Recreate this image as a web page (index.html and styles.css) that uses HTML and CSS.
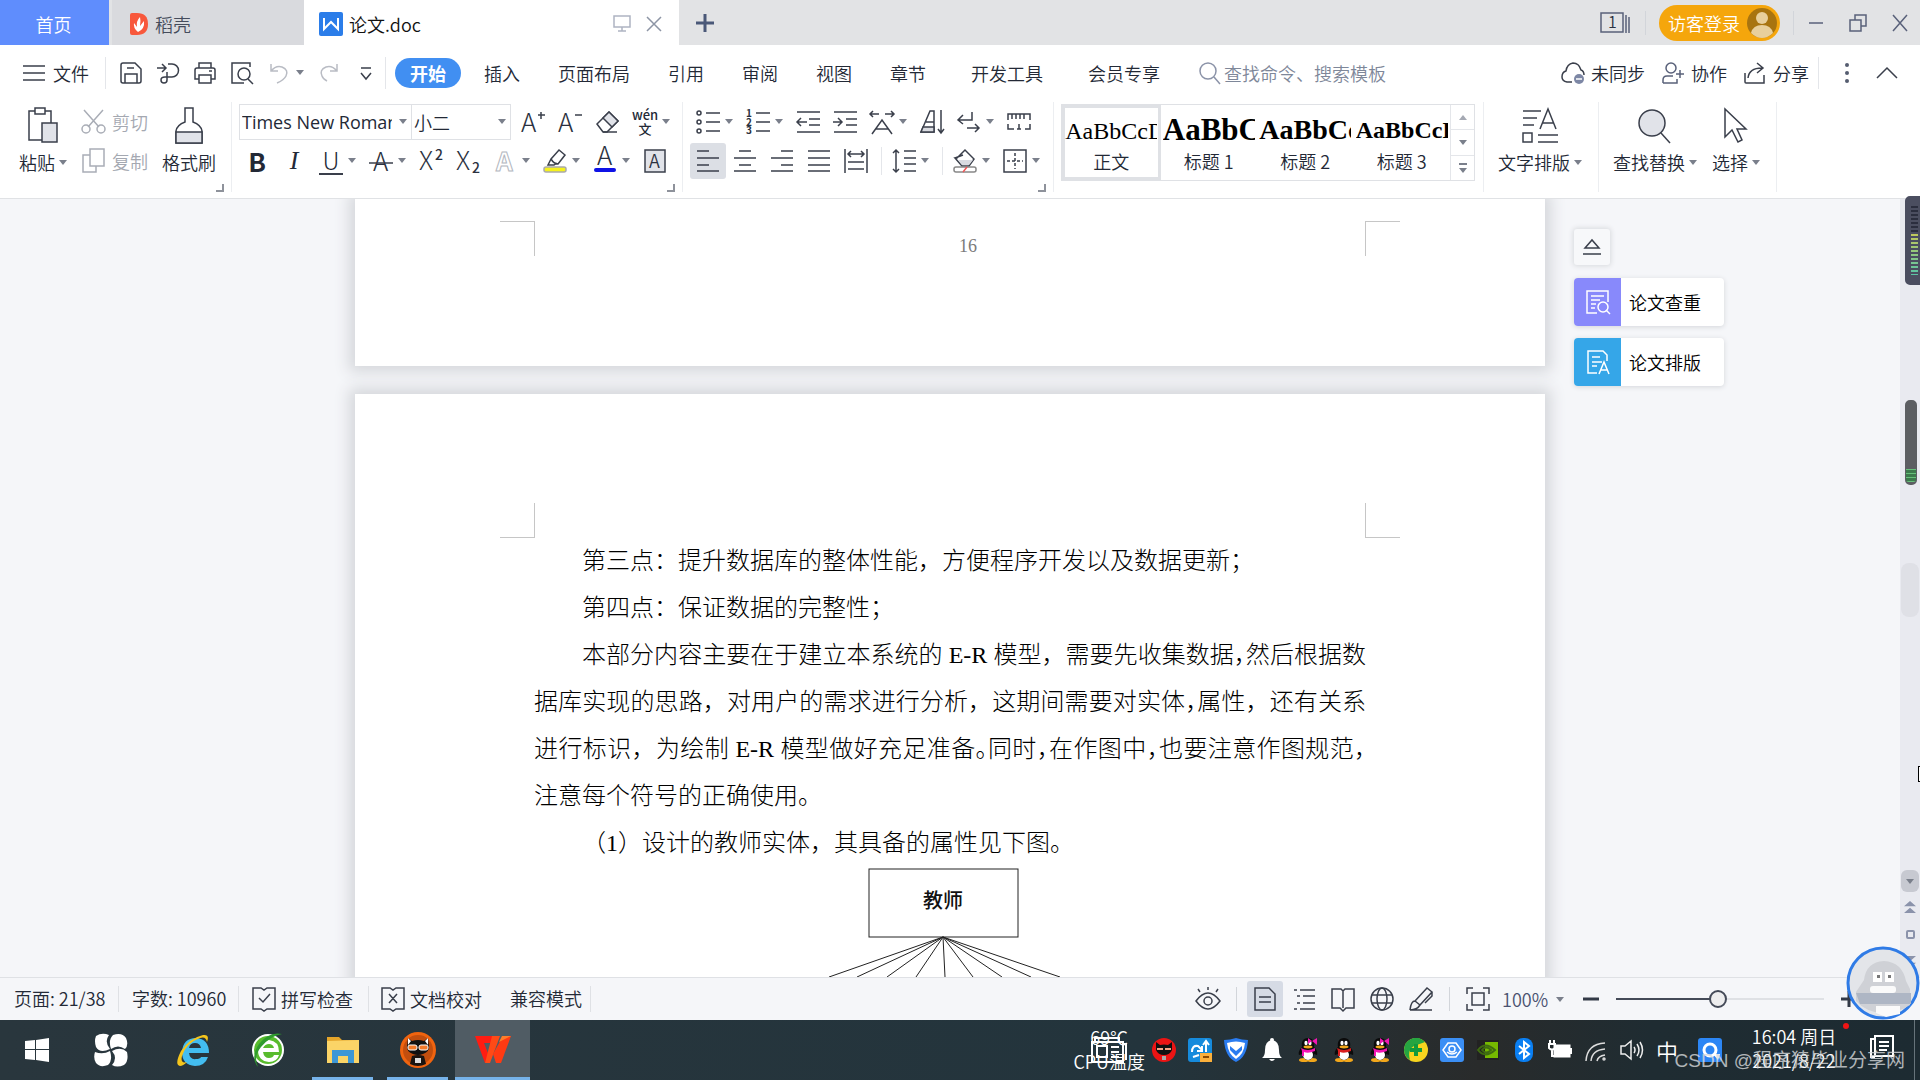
FILE: index.html
```
<!DOCTYPE html>
<html lang="zh-CN">
<head>
<meta charset="utf-8">
<title>论文.doc</title>
<link rel="stylesheet" href="styles.css">
</head>
<body>
<svg class="defs" aria-hidden="true">
  <symbol id="qq" viewBox="0 0 24 24">
    <ellipse cx="8" cy="22" rx="5" ry="2" fill="#f2a71b"/><ellipse cx="16" cy="22" rx="5" ry="2" fill="#f2a71b"/>
    <path d="M12 0c-5 0-7 4-6 9-2 2-4 5-3 8l3-1c1 4 3 6 6 6s5-2 6-6l3 1c1-3-1-6-3-8 1-5-1-9-6-9z" fill="#0b0b0b"/>
    <ellipse cx="12" cy="17" rx="5" ry="5" fill="#fff"/>
    <ellipse cx="10" cy="5" rx="1.600" ry="2.200" fill="#fff"/><ellipse cx="14" cy="5" rx="1.600" ry="2.200" fill="#fff"/>
    <ellipse cx="12" cy="9" rx="4.500" ry="1.400" fill="#f2a71b"/>
    <path d="M5 10q7 4 14 0v3q-7 3-11 1v4H6v-5z" fill="currentColor"/>
  </symbol>
  <symbol id="bow" viewBox="0 0 24 24"><path d="M16 3l-4-3v6zM16 3l5-3v7z" fill="#f216b4"/></symbol>
</svg>
<div class="app">
  <header class="tabs">
    <button class="tab home">首页</button>
    <button class="tab docer">
      <svg width="18" height="22" viewBox="0 0 18 22"><path d="M0 2Q0 0 2 0h5q11 0 11 11T7 22H2q-2 0-2-2z" fill="#f8583c"/><path d="M8 19q-5-4-4-9l3 4q-1-6 3-10 1 4 0 9l4-5q1 8-6 11z" fill="#fff"/></svg>稻壳</button>
    <div class="tab doc">
      <svg width="24" height="24" viewBox="0 0 24 24"><rect width="24" height="24" rx="2" fill="#2b7de9"/><path d="M5 6v11l7-7 7 7V6" fill="none" stroke="#fff" stroke-width="2"/></svg>
      <span class="name">论文.doc</span>
      <button class="plain" aria-label="预览"><svg class="ic pale" width="18" height="18" viewBox="0 0 18 18"><path d="M1 1h16v11H1zM9 12v4M5 16h8"/></svg></button>
      <button class="plain" aria-label="关闭标签"><svg class="ic gray" width="18" height="18" viewBox="0 0 18 18"><path d="M2 2l14 14M16 2L2 16"/></svg></button>
    </div>
    <button class="plain add" aria-label="新建"><svg width="18" height="18" viewBox="0 0 18 18"><path d="M9 0v18M0 9h18" stroke="#4a5878" stroke-width="3"/></svg></button>
    <div class="window">
      <button class="plain" aria-label="窗口"><svg class="ic slate" width="32" height="24" viewBox="0 0 32 24"><path d="M1 2h22v19H1zM26 4v18M29 6v16"/><text x="8" y="17" class="t16">1</text></svg></button>
      <i class="sep"></i>
      <button class="login">访客登录<svg width="30" height="30" viewBox="0 0 30 30"><circle cx="15" cy="15" r="15" fill="#a87410"/><circle cx="15" cy="10" r="6" fill="#e8cf9c"/><path d="M4 25q2-8 11-8t11 8q-5 5-11 5T4 25z" fill="#e8cf9c"/></svg></button>
      <i class="sep"></i>
      <button class="plain" aria-label="最小化"><svg class="ic slate" width="18" height="18" viewBox="0 0 18 18"><path d="M2 9h14"/></svg></button>
      <button class="plain" aria-label="还原"><svg class="ic slate" width="18" height="18" viewBox="0 0 18 18"><path d="M1 6h11v11H1zM6 6V1h11v11h-5"/></svg></button>
      <button class="plain" aria-label="关闭"><svg class="ic slate" width="18" height="18" viewBox="0 0 18 18"><path d="M2 1l14 16M16 1L2 17"/></svg></button>
    </div>
  </header>

  <nav class="menu">
    <button class="file"><svg class="ic" width="22" height="18" viewBox="0 0 22 18"><path d="M0 2h22M0 9h22M0 16h22"/></svg>文件</button>
    <i class="sep tall"></i>
    <div class="quick">
      <button class="plain" aria-label="保存"><svg class="ic" width="24" height="24" viewBox="0 0 24 24"><path d="M2 4q0-2 2-2h12l6 6v12q0 2-2 2H4q-2 0-2-2zM6 22v-9h12v9M8 7h7"/></svg></button>
      <button class="plain" aria-label="输出"><svg class="ic" width="24" height="24" viewBox="0 0 24 24"><path d="M1 7h8M6 3l4 4-4 4M12 3h4a6 6 0 0 1 0 13H9q-4 0-4 3t3 3 3-3V11"/></svg></button>
      <button class="plain" aria-label="打印"><svg class="ic" width="24" height="24" viewBox="0 0 24 24"><path d="M6 7V2h12v5M6 18H2V9q0-2 2-2h16q2 0 2 2v9h-4M6 14h12v8H6zM16 10h3"/></svg></button>
      <button class="plain" aria-label="打印预览"><svg class="ic" width="24" height="24" viewBox="0 0 24 24"><path d="M7 22H2V2h18v4M18 18l5 5"/><circle cx="14" cy="13" r="6"/><path d="M7 22h7"/></svg></button>
      <button class="plain dd" aria-label="撤销"><svg class="ic faint" width="24" height="24" viewBox="0 0 24 24"><path d="M4 3v7h7M4 10q5-6 11-4 7 3 4 9-2 4-9 7"/></svg><i class="caret"></i></button>
      <button class="plain" aria-label="恢复"><svg class="ic faint" width="24" height="24" viewBox="0 0 24 24"><path d="M20 3v7h-7M20 10q-5-6-11-4-7 3-4 9 1 3 5 5"/></svg></button>
      <button class="plain" aria-label="更多"><svg class="ic" width="24" height="24" viewBox="0 0 24 24"><path d="M7 7h10M7 12l5 6 5-6"/></svg></button>
    </div>
    <i class="sep tall"></i>
    <div class="menus">
      <button class="current">开始</button>
      <button>插入</button><button>页面布局</button><button>引用</button><button>审阅</button><button>视图</button><button>章节</button><button class="wide">开发工具</button><button class="wide">会员专享</button>
      <label class="search"><svg class="ic mute" width="24" height="24" viewBox="0 0 24 24"><circle cx="10" cy="10" r="8"/><path d="M16 16l6 7"/></svg><input type="text" placeholder="查找命令、搜索模板"></label>
    </div>
    <div class="share">
      <button><svg class="ic" width="24" height="24" viewBox="0 0 24 24"><path d="M11 21H6q-5-1-5-5 0-5 4-6 1-7 7-8 6 0 8 7 3 1 3 5"/><circle cx="18" cy="18" r="5" fill="#7d87a5" stroke="none"/><path d="M15 18h6" stroke="#fff"/></svg>未同步</button>
      <button><svg class="ic slate" width="24" height="24" viewBox="0 0 24 24"><circle cx="10" cy="7" r="5"/><path d="M2 22v-3q0-4 4-4h6M2 22h14v-4M19 9v8M15 13h8"/></svg>协作</button>
      <button><svg class="ic" width="24" height="24" viewBox="0 0 24 24"><path d="M2 12v9q0 1 1 1h18v-8M5 17q1-10 14-10M14 2l6 5-6 5"/></svg>分享</button>
      <i class="sep tall"></i>
      <button class="plain" aria-label="菜单"><svg width="24" height="24" viewBox="0 0 24 24" fill="#555d70"><circle cx="12" cy="4" r="2"/><circle cx="12" cy="12" r="2"/><circle cx="12" cy="20" r="2"/></svg></button>
      <button class="plain" aria-label="收起功能区"><svg class="ic" width="24" height="24" viewBox="0 0 24 24"><path d="M2 17L12 7l10 10"/></svg></button>
    </div>
  </nav>

  <section class="ribbon">
    <div class="group clip">
      <button class="big"><svg class="ic" width="36" height="40" viewBox="0 0 36 40"><path d="M10 5H4v29h13M26 17V5h-6M10 2h10v6H10z"/><path d="M17 17h15v19H17z" fill="#e1e3e9"/></svg><span>粘贴<i class="caret"></i></span></button>
      <div class="rows">
        <button class="off"><svg class="ic" width="25" height="25" viewBox="0 0 25 25"><path d="M3 1l15 17M22 1L7 18"/><circle cx="5" cy="20" r="4"/><circle cx="20" cy="20" r="4"/></svg>剪切</button>
        <button class="off"><svg class="ic" width="25" height="25" viewBox="0 0 25 25"><path d="M9 1h14v17H9zM9 7H2v17h13v-6"/></svg>复制</button>
      </div>
      <button class="big"><svg class="ic" width="36" height="40" viewBox="0 0 36 40"><path d="M14 2h8v14q8 3 9 9v12H5V25q1-6 9-9z"/><path d="M5 26h26v11H5z" fill="#e1e3e9"/></svg><span>格式刷</span></button>
      <svg class="corner" width="8" height="8" viewBox="0 0 8 8"><path d="M7 0v7H0"/></svg>
    </div>
    <div class="group font">
      <div class="line">
        <div class="combo">
          <label class="family"><select aria-label="字体"><option>Times New Roman</option></select><i class="caret"></i></label>
          <label class="size"><select aria-label="字号"><option>小二</option></select><i class="caret"></i></label>
        </div>
        <button aria-label="增大字号"><svg class="ic" width="24" height="24" viewBox="0 0 24 24"><text x="0" y="22" class="t24">A</text><path d="M17 5h7M20 2v7"/></svg></button>
        <button aria-label="减小字号"><svg class="ic" width="24" height="24" viewBox="0 0 24 24"><text x="0" y="22" class="t24">A</text><path d="M17 5h7"/></svg></button>
        <button aria-label="清除格式"><svg class="ic" width="24" height="24" viewBox="0 0 24 24"><path d="M2 14L14 2l9 9-11 11H8z"/><path d="M8 8l6-6 9 9-6 6z" fill="#e1e3e9"/><path d="M8 22h14"/></svg></button>
        <button class="dd pinyin" aria-label="拼音指南"><span>wén<br>文</span><i class="caret"></i></button>
      </div>
      <div class="line">
        <button class="bold" aria-label="加粗">B</button>
        <button class="italic" aria-label="倾斜">I</button>
        <button class="dd under" aria-label="下划线"><b>U</b><i class="caret"></i></button>
        <button class="dd" aria-label="删除线"><svg class="ic" width="24" height="24" viewBox="0 0 24 24"><text x="4" y="22" class="t24">A</text><path d="M0 14h24"/></svg><i class="caret"></i></button>
        <button aria-label="上标"><svg class="ic" width="24" height="24" viewBox="0 0 24 24"><text x="0" y="21" class="t24">X</text><text x="16" y="11" class="t12">2</text></svg></button>
        <button aria-label="下标"><svg class="ic" width="24" height="24" viewBox="0 0 24 24"><text x="0" y="21" class="t24">X</text><text x="16" y="24" class="t12">2</text></svg></button>
        <button class="dd" aria-label="文字效果"><svg class="ic" width="24" height="24" viewBox="0 0 24 24"><text x="3" y="22" class="t24 hollow">A</text></svg><i class="caret"></i></button>
        <button class="dd" aria-label="突出显示"><svg class="ic" width="24" height="24" viewBox="0 0 24 24"><path d="M8 10l8-9 6 5-7 9q-4 0-7-5zM8 10l-3 6h6l3-2"/><rect x="1" y="18" width="22" height="5" rx="2" fill="#f6f21c" stroke="#aaa"/></svg><i class="caret"></i></button>
        <button class="dd" aria-label="字体颜色"><svg class="ic" width="24" height="24" viewBox="0 0 24 24"><text x="4" y="16" class="t24">A</text><rect x="1" y="19" width="22" height="4" rx="2" fill="#0f12e6" stroke="none"/></svg><i class="caret"></i></button>
        <button aria-label="字符底纹"><svg class="ic" width="24" height="24" viewBox="0 0 24 24"><rect x="2" y="1" width="20" height="22" fill="#e1e3e9"/><text x="6" y="19" class="t18">A</text></svg></button>
      </div>
      <svg class="corner" width="8" height="8" viewBox="0 0 8 8"><path d="M7 0v7H0"/></svg>
    </div>
    <div class="group para">
      <div class="line">
        <button class="dd" aria-label="项目符号"><svg class="ic" width="24" height="24" viewBox="0 0 24 24"><circle cx="3" cy="3" r="2"/><circle cx="3" cy="12" r="2"/><circle cx="3" cy="21" r="2"/><path d="M10 3h14M10 12h14M10 21h14"/></svg><i class="caret"></i></button>
        <button class="dd" aria-label="编号"><svg class="ic" width="24" height="24" viewBox="0 0 24 24"><text x="0" y="7" class="t10">1</text><text x="0" y="16" class="t10">2</text><text x="0" y="24" class="t10">3</text><path d="M10 3h14M10 12h14M10 21h14"/></svg><i class="caret"></i></button>
        <button aria-label="减少缩进"><svg class="ic" width="24" height="24" viewBox="0 0 24 24"><path d="M1 2h23M13 9h11M13 15h11M1 22h23M11 12H1M5 8l-4 4 4 4"/></svg></button>
        <button aria-label="增加缩进"><svg class="ic" width="24" height="24" viewBox="0 0 24 24"><path d="M1 2h23M13 9h11M13 15h11M1 22h23M0 12h9M5 8l4 4-4 4"/></svg></button>
        <button class="dd" aria-label="字符缩放"><svg class="ic" width="24" height="24" viewBox="0 0 24 24"><path d="M0 4h9M15 4h9M3 1L0 4l3 3M21 1l3 3-3 3M2 24L12 10l10 14M6 19h12"/></svg><i class="caret"></i></button>
        <button aria-label="排序"><svg class="ic" width="24" height="24" viewBox="0 0 24 24"><path d="M1 22L10 1h4v21zM6 12h8"/><path d="M3 17h11v5H1z" fill="#d9dbe1"/><path d="M21 0v22M18 19l3 4 3-4"/></svg></button>
        <button class="dd" aria-label="显示编辑标记"><svg class="ic" width="24" height="24" viewBox="0 0 24 24"><path d="M15 2v8H2M6 5L1 10l5 4M10 18h12M18 14l4 4-4 4"/></svg><i class="caret"></i></button>
        <button aria-label="制表位"><svg class="ic" width="24" height="24" viewBox="0 0 24 24"><path d="M1 10V4h22v6M5 4v5M9 4v5M13 4v5M17 4v5M1 14v5h6M10 19h4M12 14v5M23 14v5h-5"/></svg></button>
      </div>
      <div class="line">
        <button class="on" aria-label="左对齐"><svg class="ic" width="24" height="24" viewBox="0 0 24 24"><path d="M1 2h12M1 9h22M1 16h12M1 22h22"/></svg></button>
        <button aria-label="居中"><svg class="ic" width="24" height="24" viewBox="0 0 24 24"><path d="M6 2h12M1 9h22M6 16h12M1 22h22"/></svg></button>
        <button aria-label="右对齐"><svg class="ic" width="24" height="24" viewBox="0 0 24 24"><path d="M11 2h12M1 9h22M11 16h12M1 22h22"/></svg></button>
        <button aria-label="两端对齐"><svg class="ic" width="24" height="24" viewBox="0 0 24 24"><path d="M1 2h22M1 9h22M1 16h22M1 22h22"/></svg></button>
        <button aria-label="分散对齐"><svg class="ic" width="24" height="24" viewBox="0 0 24 24"><path d="M1 0v24M23 0v24M4 5h16M7 2L4 5l3 3M17 2l3 3-3 3M4 13h16M4 20h16"/></svg></button>
        <button class="dd cut" aria-label="行距"><svg class="ic" width="24" height="24" viewBox="0 0 24 24"><path d="M4 1v22M1 4l3-3 3 3M1 20l3 3 3-3M12 2h12M12 9h12M12 15h12M12 22h12"/></svg><i class="caret"></i></button>
        <button class="dd cut" aria-label="底纹颜色"><svg class="ic" width="24" height="24" viewBox="0 0 24 24"><path d="M4 9L12 1l9 9-5 7H9L2 9zM2 9l8-3"/><path d="M5 11h15l-4 5H9z" fill="#d9dbe1" stroke="none"/><rect x="1" y="18" width="22" height="5" rx="2" stroke="#888"/><path d="M10 23l4-5" stroke="#e55"/></svg><i class="caret"></i></button>
        <button class="dd" aria-label="边框"><svg class="ic" width="24" height="24" viewBox="0 0 24 24"><path d="M1 1h22v22H1z"/><path d="M12 4v16M4 12h16" stroke-dasharray="3 2"/></svg><i class="caret"></i></button>
      </div>
      <svg class="corner" width="8" height="8" viewBox="0 0 8 8"><path d="M7 0v7H0"/></svg>
    </div>
    <div class="group styles">
      <div class="gallery">
        <button class="style picked"><span class="sample body">AaBbCcDd</span>正文</button>
        <button class="style"><span class="sample h1">AaBbCc</span>标题 1</button>
        <button class="style"><span class="sample h2">AaBbCcD</span>标题 2</button>
        <button class="style"><span class="sample h3">AaBbCcDd</span>标题 3</button>
        <div class="steps">
          <button aria-label="上一行"><i class="caret up"></i></button>
          <button aria-label="下一行"><i class="caret"></i></button>
          <button aria-label="更多样式" class="more"><i class="caret"></i></button>
        </div>
      </div>
    </div>
    <div class="group one">
      <button class="big"><svg class="ic" width="36" height="40" viewBox="0 0 36 40"><path d="M1 5h18M1 12h14M1 19h11M16 36h20M16 29h20M1 27h9v9H1z"/><path d="M18 23L26 3l8 20M20 17h12"/></svg><span>文字排版<i class="caret"></i></span></button>
    </div>
    <div class="group two">
      <button class="big"><svg class="ic" width="36" height="40" viewBox="0 0 36 40"><circle cx="15" cy="17" r="13" fill="#e1e3e9"/><path d="M24 27l9 10"/></svg><span>查找替换<i class="caret"></i></span></button>
      <button class="big"><svg class="ic" width="36" height="40" viewBox="0 0 36 40"><path d="M7 3v28l7-7 6 12 4-2-5-11h9z"/></svg><span>选择<i class="caret"></i></span></button>
    </div>
  </section>

  <main class="work">
    <div class="canvas">
      <article class="page first">
        <i class="crop tl"></i><i class="crop tr"></i>
        <span class="folio">16</span>
      </article>
      <article class="page second">
        <i class="crop bl"></i><i class="crop br"></i>
        <p>第三点：提升数据库的整体性能，方便程序开发以及数据更新；</p>
        <p>第四点：保证数据的完整性；</p>
        <p><span class="full in">本部分内容主要在于建立本系统的 <span class="latin">E-R</span> 模型，需要先收集数据<s>，</s>然后根据数</span>
        <span class="full">据库实现的思路，对用户的需求进行分析，这期间需要对实体<s>，</s>属性，还有关系</span>
        <span class="full">进行标识，为绘制 <span class="latin">E-R</span> 模型做好充足准备<s>。</s>同时<s>，</s>在作图中<s>，</s>也要注意作图规范<s>，</s></span>
        <span class="last">注意每个符号的正确使用。</span></p>
        <p>（1）设计的教师实体，其具备的属性见下图。</p>
        <svg class="er" viewBox="0 1 832 120" width="832" height="120">
          <rect x="335" y="3" width="149" height="68"/>
          <path d="M409 71L295 111M409 71L323 111M409 71L353 111M409 71L382 111M409 71L411 111M409 71L439 111M409 71L468 111M409 71L497 111M409 71L526 111"/>
          <text x="409" y="42" text-anchor="middle">教师</text>
        </svg>
      </article>
    </div>
    <aside class="tools">
      <button class="fold" aria-label="收起"><svg class="ic" width="20" height="20" viewBox="0 0 20 20"><path d="M3 11l7-8 7 8zM1 17h18"/></svg></button>
      <button class="card violet"><span><svg width="26" height="26" viewBox="0 0 26 26"><path d="M12 24H2V2h21v11M6 7h13M6 11h9M6 15h5M6 19h4"/><circle cx="18" cy="18" r="5"/><path d="M21 21l4 4"/></svg></span>论文查重</button>
      <button class="card sky"><span><svg width="26" height="26" viewBox="0 0 26 26"><path d="M12 24H3V2h15l4 4v6M7 8h8M7 13h10M7 17h5M14 25l5-12 5 12M16 21h7"/></svg></span>论文排版</button>
    </aside>
    <div class="scroll">
      <i class="thumb"></i>
      <div class="jump">
        <button class="down" aria-label="向下"><i class="caret"></i></button>
        <svg width="14" height="12" viewBox="0 0 16 14" fill="#8b93ab"><path d="M1 6l7-6 7 6zM1 14l7-6 7 6z"/></svg>
        <i class="obj"></i>
        <svg width="14" height="12" viewBox="0 0 16 14" fill="#8b93ab"><path d="M1 0h14L8 6zM1 8h14l-7 6z"/></svg>
      </div>
      <i class="meter a"></i><i class="meter b"></i><i class="bar"></i>
    </div>
  </main>

  <footer class="status">
    <div class="facts">
      <span class="f1">页面: 21/38</span><span class="f2">字数: 10960</span>
      <button class="f3"><svg class="ic" width="24" height="26" viewBox="0 0 24 26"><path d="M1 2h8l3 2 3-2h8v21h-8l-3 2-3-2H1zM7 12l4 4 7-8"/></svg>拼写检查</button>
      <button class="f4"><svg class="ic" width="24" height="26" viewBox="0 0 24 26"><path d="M1 2h8l3 2 3-2h8v21h-8l-3 2-3-2H1zM8 8l8 9M16 8l-8 9"/></svg>文档校对</button>
      <span class="f5">兼容模式</span>
    </div>
    <div class="views">
      <button aria-label="护眼模式"><svg class="ic" width="24" height="24" viewBox="0 0 24 24"><path d="M0 14q12-16 24 0-12 16-24 0zM12 0v3M2 2l2 3M22 2l-2 3"/><circle cx="12" cy="14" r="4"/></svg></button>
      <i class="sep"></i>
      <button class="on" aria-label="页面视图"><svg class="ic" width="24" height="24" viewBox="0 0 24 24"><path d="M2 1h14l6 6v16H2zM6 10h12M6 15h12"/></svg></button>
      <button aria-label="大纲"><svg class="ic" width="24" height="24" viewBox="0 0 24 24"><path d="M2 3h3M8 3h15M5 9h3M11 9h12M5 16h3M11 16h12M2 22h3M8 22h15"/></svg></button>
      <button aria-label="阅读版式"><svg class="ic" width="24" height="24" viewBox="0 0 24 24"><path d="M1 2h9l2 2 2-2h9v19h-8l-3 3-3-3H1zM12 4v17"/></svg></button>
      <button aria-label="Web 版式"><svg class="ic" width="24" height="24" viewBox="0 0 24 24"><circle cx="12" cy="12" r="11"/><ellipse cx="12" cy="12" rx="5" ry="11"/><path d="M2 8h20M2 16h20"/></svg></button>
      <button aria-label="写作模式"><svg class="ic" width="24" height="24" viewBox="0 0 24 24"><path d="M1 23q1-9 5-9l12-13 5 4L11 18q-3 5-10 5h22M6 14l5 4M23 5v4l-7 7"/></svg></button>
      <i class="sep"></i>
      <button aria-label="适合页面"><svg class="ic" width="24" height="24" viewBox="0 0 24 24"><path d="M1 7V1h6M17 1h6v6M23 17v6h-6M7 23H1v-6M6 6h12v12H6z"/></svg></button>
      <button class="zoom">100%<i class="caret"></i></button>
      <button aria-label="缩小"><svg width="16" height="16" viewBox="0 0 16 16"><path d="M0 8h16" stroke="#333a47" stroke-width="3"/></svg></button>
      <input class="slider" type="range" min="0" max="100" value="49" aria-label="显示比例">
      <button aria-label="放大"><svg width="16" height="16" viewBox="0 0 16 16"><path d="M0 8h16M8 0v16" stroke="#333a47" stroke-width="3"/></svg></button>
    </div>
    <div class="pet">
      <svg width="74" height="74" viewBox="0 0 74 74"><circle cx="37" cy="37" r="35" fill="#e3e5e9" stroke="#2f7be6" stroke-width="3"/><path d="M18 34Q20 16 38 15q18 1 22 20l4 8v16q-12 8-28 8-16-1-26-12v-9z" fill="#cfd1d6"/><path d="M10 47h55v11H14z" fill="#aeb6c4"/><rect x="27" y="26" width="9" height="10" fill="#fff"/><rect x="39" y="26" width="9" height="10" fill="#fff"/><rect x="31" y="29" width="3" height="3" fill="#777"/><rect x="42" y="29" width="3" height="3" fill="#777"/><rect x="24" y="40" width="26" height="7" rx="3" fill="#fafafa"/><path d="M30 60h24v8l-14 3-10-4z" fill="#fafafa"/></svg>
    </div>
  </footer>

  <div class="taskbar">
    <div class="pins">
      <button aria-label="开始菜单"><svg width="24" height="24" viewBox="0 0 24 24" fill="#fff"><path d="M0 3l10-1v9H0zM11 2l13-2v11H11zM0 12h10v10L0 21zM11 12h13v12l-13-2z"/></svg></button>
      <button aria-label="收纳"><svg width="34" height="34" viewBox="0 0 34 34" fill="#fff"><path d="M2 3Q8-1 15 2q-5 7 1 14Q6 21 2 14q-2-6 0-11z"/><path d="M19 2q9-3 13 3 3 7-1 11-7-5-14 0-3-9 2-14z"/><path d="M33 19q2 9-3 13-7 3-12 0 6-7 0-14 9-5 15 1z"/><path d="M1 19q8 3 15-1 3 9-2 14-8 3-12-2-3-5-1-11z"/></svg></button>
      <button class="after" aria-label="Internet Explorer"><svg width="34" height="34" viewBox="0 0 34 34"><path d="M33 20H13q1 7 7 6 4 0 5-2h7q-3 9-13 9-13-1-13-14Q7 5 20 5q13 1 13 15zM13 15h12q-1-5-6-5t-6 5z" fill="#43bdf0"/><path d="M31 9q3-8-4-7Q14 5 5 18-2 32 4 33q3 0 7-4-7 2-5-6Q10 10 24 5q6-2 7 4z" fill="#f5c51c"/></svg></button>
      <button aria-label="360 浏览器"><svg width="34" height="36" viewBox="0 0 34 36"><circle cx="17" cy="18" r="16" fill="#fff"/><circle cx="17" cy="18" r="14" fill="#58bb2d"/><path d="M28 20H12q1 6 6 6 4 0 5-3h5q-2 7-10 7-11-1-11-12Q8 8 18 8q10 1 10 12zM12 16h11q-1-4-5-4t-6 4z" fill="#fff"/><path d="M31 2Q18-1 8 12-1 25 7 35q-5-10 3-20 9-11 21-13z" fill="#2f9b2d"/></svg></button>
      <button class="run" aria-label="文件资源管理器"><svg width="32" height="28" viewBox="0 0 32 28"><path d="M0 1h12l3 3h17v22H0z" fill="#e5a52a"/><path d="M0 5l32-1v23H0z" fill="#fbd467"/><path d="M5 14h22v13h-6v-7H11v7H5z" fill="#3d97d6"/></svg></button>
      <button class="run" aria-label="录屏"><svg width="36" height="36" viewBox="0 0 36 36"><circle cx="18" cy="18" r="18" fill="#f0640f"/><circle cx="18" cy="18" r="15" fill="#c24e0e"/><path d="M8 6l4 3q6-2 12 0l4-3 1 9q0 5-6 7-5 2-10 0-6-2-6-7z" fill="#111"/><path d="M12 24q6-2 12 0l2 8q-8 4-16 0z" fill="#1a1410"/><rect x="8" y="13" width="9" height="5" rx="2" fill="#f27a2a" stroke="#fff"/><rect x="19" y="13" width="9" height="5" rx="2" fill="#f27a2a" stroke="#fff"/><path d="M8 6l3 3-3 4zM28 6l-3 3 3 4z" fill="#fff"/><rect x="15" y="26" width="6" height="5" fill="#ddd"/></svg></button>
      <button class="run active" aria-label="WPS"><svg width="36" height="28" viewBox="0 0 36 28"><path d="M0 0h24l-3 7H9l6 15-5 5z" fill="#ff1c12"/><path d="M17 0h8L15 27h-5z" fill="#ff4a16"/><path d="M36 0L26 27h-5l-3-9L28 0z" fill="#ff3a12"/><path d="M36 0h-9l-3 6z" fill="#ff7d2a"/></svg></button>
    </div>
    <div class="tray">
      <div class="temp">69℃<br>CPU温度<svg width="36" height="26" viewBox="0 0 36 26" fill="none" stroke="#fff" stroke-width="2"><path d="M1 5h31v20H1zM4 5V1h24v4M32 7h3v16M6 9h10v11H6zM20 10h8M20 15h8M20 20h8"/></svg></div>
      <svg width="24" height="24" viewBox="0 0 24 24"><circle cx="12" cy="12" r="12" fill="#ec1414"/><path d="M4 4l4 3q4-1 8 0l4-3v8q-2 5-8 5t-8-5z" fill="#111"/><path d="M5 10h6v2H5zM13 10h6v2h-6z" fill="#f6a486"/><path d="M10 18h4v4h-4z" fill="#aaa"/></svg>
      <svg width="24" height="24" viewBox="0 0 24 24"><rect width="24" height="24" rx="3" fill="#168bdc"/><path d="M4 14q0-7 6-6l4 4M14 8v5H9M18 14V3M15 7l3-4 3 4M5 19l6-2" fill="none" stroke="#fff" stroke-width="2"/><rect x="12" y="15" width="12" height="9" fill="#fbb03b"/><path d="M15 19h6" stroke="#8b4a00" stroke-width="2"/></svg>
      <svg width="24" height="24" viewBox="0 0 24 24"><path d="M0 2q6 0 12-2 6 2 12 2-1 17-12 22Q1 19 0 2z" fill="#2a7cf0"/><path d="M3 5q9-3 18 0-1 11-9 16Q4 16 3 5z" fill="#fff"/><path d="M6 8l6 5 6-5v4l-6 6-6-6z" fill="#2a7cf0"/></svg>
      <svg width="24" height="24" viewBox="0 0 24 24" fill="#fff"><path d="M2 20q3-2 3-8 0-9 7-10 7 1 7 10 0 6 3 8zM9 21h6q-3 4-6 0z"/><circle cx="12" cy="2" r="2"/></svg>
      <svg class="pink" width="24" height="24"><use href="#qq"/><use href="#bow"/></svg>
      <svg class="red" width="24" height="24"><use href="#qq"/></svg>
      <svg class="pink" width="24" height="24"><use href="#qq"/><use href="#bow"/></svg>
      <svg width="24" height="24" viewBox="0 0 24 24"><circle cx="12" cy="12" r="12" fill="#f7d51e"/><path d="M0 12A12 12 0 0 1 21 4L10 8q-7 4-4 14-6-4-6-10z" fill="#25a541"/><path d="M12 6v12M6 12h12" stroke="#119a3c" stroke-width="4"/></svg>
      <svg width="24" height="24" viewBox="0 0 24 24" fill="none" stroke="#fff" stroke-width="1.500"><rect width="24" height="24" rx="3" fill="#3b8ff5" stroke="none"/><path d="M8 5h8l5 7-5 7H8l-5-7z"/><circle cx="12" cy="11" r="3"/><path d="M7 14q5 4 10 0"/></svg>
      <svg width="24" height="24" viewBox="0 0 24 24"><rect x="1" y="2" width="22" height="20" fill="#222"/><path d="M9 4h13v16H9z" fill="#76b900"/><path d="M2 12q7-9 17 0-10 9-17 0zM6 12q4-5 9 0-5 5-9 0z" fill="none" stroke="#3f6b10" stroke-width="2"/></svg>
      <svg width="24" height="24" viewBox="0 0 24 24"><rect x="3" width="18" height="24" rx="8" fill="#0a7ff2"/><path d="M7 8l10 8-5 4V4l5 4-10 8" fill="none" stroke="#fff" stroke-width="2"/></svg>
      <svg width="24" height="24" viewBox="0 0 24 24"><rect x="6" y="7" width="16" height="12" fill="#fff" stroke="#fff"/><path d="M23 10v6M1 6h6v4q-3 3-6 0zM2 2v4M6 2v4M4 12v6h3" fill="none" stroke="#fff" stroke-width="2"/></svg>
      <svg width="24" height="24" viewBox="0 0 24 24" fill="none" stroke="#ddd" stroke-width="1.500"><path d="M2 23Q3 6 21 5M7 23q1-11 14-12M13 23q1-5 8-6"/><circle cx="20" cy="21" r="1"/></svg>
      <svg width="24" height="24" viewBox="0 0 24 24" fill="none" stroke="#eee" stroke-width="1.500"><path d="M1 8h4l6-5v18l-6-5H1zM14 9q2 3 0 6M17 6q4 6 0 12M20 4q5 8 0 16"/></svg>
      <span class="ime">中</span>
      <svg width="24" height="24" viewBox="0 0 24 24"><rect width="24" height="24" rx="3" fill="#2c86f5"/><circle cx="12" cy="12" r="6" fill="none" stroke="#fff" stroke-width="3"/><path d="M15 16h7l-2 6z" fill="#fff"/></svg>
      <div class="clock">16:04 周日<br>2021/8/22<i class="dot"></i></div>
      <svg class="note" width="24" height="26" viewBox="0 0 24 26" fill="none" stroke="#fff" stroke-width="2"><path d="M5 1h18v20H5zM5 4H1v18h4M9 7h10M9 11h10M9 15h8"/></svg>
      <i class="peek"></i>
    </div>
    <span class="mark">CSDN @程序猿毕业分享网</span>
  </div>
</div>
</body>
</html>
```
FILE: styles.css
```
* { box-sizing: border-box; }
body {
  margin: 0;
  font: 350 18px/24px "Noto Sans CJK SC", sans-serif;
  color: #232936;
}
button, input, select { font: inherit; color: inherit; }
button {
  display: inline-flex;
  align-items: center;
  padding: 0;
  border: 0;
  background: none;
  white-space: nowrap;
}
svg { display: block; flex: none; }
.defs { position: absolute; width: 0; height: 0; }
.app { display: flex; flex-direction: column; height: 100vh; overflow: hidden; background: #fff; }

.ic { fill: none; stroke: #3a3f4b; stroke-width: 1.5; overflow: visible; }
.ic text { fill: #2b3140; stroke: none; }
.pale { stroke: #aeb4c2; }
.gray { stroke: #8d95a5; }
.slate { stroke: #59617a; }
.mute { stroke: #8b93a8; }
.faint { stroke: #b9bcc4; }
.t10 { font-size: 10px; font-weight: 700; }
.t12 { font-size: 14px; font-weight: 500; }
.t16 { font-size: 16px; }
.t18 { font-size: 18px; }
.t24 { font-size: 26px; font-weight: 300; }
.ic .hollow { fill: #fff; stroke: #b3b7c0; stroke-width: 1; font-weight: 700; }
.caret {
  flex: none;
  width: 0;
  height: 0;
  border: 4px solid transparent;
  border-top: 5px solid #7a7f8b;
  border-bottom: 0;
}
.caret.up { border-top: 0; border-bottom: 5px solid #a5a9b3; }
.sep { flex: none; width: 1px; height: 24px; background: #d2d5da; }
.sep.tall { height: 32px; background: #e4e6ea; }

/* title bar */
.tabs { display: flex; align-items: stretch; height: 45px; flex: none; background: #e2e3e5; }
.tab { display: flex; align-items: center; gap: 7px; padding-top: 2px; }
.home { width: 109px; padding-right: 2px; justify-content: center; background: #5f8dfd; color: #fff; }
.docer { width: 192px; margin-left: 3px; padding-left: 18px; background: #d9dade; color: #454c5c; }
.doc { width: 375px; padding: 2px 16px 0 15px; background: #fff; gap: 6px; color: #111; }
.doc .name { flex: 1; }
.doc button + button { margin-left: 8px; }
.add { margin-left: 17px; }
.window { display: flex; align-items: center; gap: 24px; margin-left: auto; padding-right: 11px; }
.window .sep { margin: 0 -11px; }
.login {
  gap: 7px;
  height: 36px;
  padding: 0 3px 0 9px;
  border-radius: 18px;
  background: #f5a60c;
  color: #fff;
}

/* menu row */
.menu { display: flex; align-items: center; height: 57px; flex: none; padding-bottom: 2px; }
.file { gap: 8px; margin: 0 16px 0 23px; }
.quick { display: flex; gap: 13px; margin: 0 7px 0 13px; }
.dd { justify-content: space-between; width: 37px; }
.menus { display: flex; align-items: center; gap: 38px; margin-left: 9px; }
.menus .current {
  height: 30px;
  margin-right: -15px;
  padding: 0 15px;
  border-radius: 15px;
  background: #418ff2;
  color: #fff;
  font-weight: 700;
}
.menus .wide { margin-left: 7px; }
.search { display: flex; align-items: center; gap: 2px; }
.search input { width: 200px; padding: 0; border: 0; background: none; outline: 0; }
.search input::placeholder { color: #7e8799; opacity: 1; }
.share { display: flex; align-items: center; gap: 16px; margin-left: auto; padding-right: 21px; }
.share button { gap: 6px; }
.share .sep { margin-left: -7px; }

/* ribbon */
.ribbon { display: flex; height: 97px; flex: none; border-bottom: 1px solid #e0e2e5; }
.group { position: relative; display: flex; height: 90px; border-right: 1px solid #eceef1; }
.corner { position: absolute; right: 7px; bottom: 0; fill: none; stroke: #8e929b; stroke-width: 2; }
.big { flex-direction: column; gap: 2px; padding-top: 4px; height: 76px; }
.big span { display: flex; align-items: center; gap: 4px; height: 28px; }
.clip { width: 232px; padding-left: 19px; }
.rows { display: flex; flex-direction: column; margin: 0 14px 0 14px; }
.off { gap: 6px; height: 39px; color: #a4a8b1; }
.off .ic { stroke: #a9adb6; }
.font, .para { flex-direction: column; }
.font { width: 451px; padding-left: 7px; }
.para { width: 371px; padding-left: 13px; }
.line { display: flex; align-items: center; gap: 13px; height: 39px; }
.font .line + .line { padding-left: 6px; }
.line button { justify-content: center; min-width: 24px; height: 36px; }
.line .dd { justify-content: space-between; }
.combo { display: flex; width: 272px; height: 36px; margin-right: -3px; border: 1px solid #dfe1e5; }
.combo label { display: flex; align-items: center; padding: 0 4px 0 2px; }
.combo select { flex: 1; min-width: 0; padding: 0; border: 0; appearance: none; background: none; outline: 0; overflow: hidden; text-overflow: clip; }
.family { width: 172px; border-right: 1px solid #dfe1e5; gap: 7px; font-family: "Open Sans", sans-serif; font-weight: 400; }
.size { flex: 1; }
.line .pinyin { width: 38px; }
.pinyin span { width: 26px; font-size: 13px; line-height: 14px; font-weight: 500; text-align: center; }
.bold { font-size: 26px; font-weight: 700; }
.italic { font: italic 26px "Liberation Serif", serif; }
.under b { width: 24px; border-bottom: 2px solid #3a3f4b; font-size: 24px; font-weight: 300; line-height: 26px; }
.line .on { width: 36px; margin: 0 -6px; background: #dcdfe5; border-radius: 3px; }
.line .cut { width: 48px; padding-left: 10px; border-left: 1px solid #e4e6ea; height: 28px; }
.styles { width: 430px; padding: 2px 7px 0 7px; }
.gallery { display: flex; width: 414px; height: 77px; border: 1px solid #dfe1e5; }
.style { flex: 1; flex-direction: column; min-width: 0; overflow: hidden; padding: 2px 2px 0; }
.picked { border: 3px solid #dfe1e5; padding: 0; }
.sample { width: 92px; height: 42px; overflow: hidden; font: 24px/46px "Liberation Serif", serif; color: #000; text-align: left; }
.picked .sample { height: 41px; }
.h1 { font-size: 31px; font-weight: 700; }
.h2 { font-size: 28px; font-weight: 700; }
.h3 { font-size: 24px; font-weight: 700; }
.steps { display: flex; flex-direction: column; width: 24px; border-left: 1px solid #e4e6ea; }
.steps button { flex: 1; justify-content: center; }
.steps button + button { border-top: 1px solid #e4e6ea; }
.more { flex-direction: column; gap: 3px; }
.more::before { content: ""; width: 8px; height: 2px; background: #7a7f8b; }
.one { width: 115px; padding-left: 14px; }
.two { width: 178px; padding-left: 14px; gap: 15px; }

/* document */
.work { position: relative; display: flex; flex: 1; min-height: 0; background: #f5f6f9; }
.canvas { display: flex; flex-direction: column; align-items: center; flex: 1; overflow: hidden; }
.page { position: relative; flex: none; width: 1190px; background: #fff; box-shadow: 0 0 14px 6px #d5d7db; }
.first { height: 167px; padding-top: 34px; margin-bottom: 28px; text-align: center; }
.folio { display: block; padding-left: 36px; font: 18px/26px "Liberation Serif", serif; color: #7b7b7b; }
.second { padding: 144px 179px 0; }
.page p { margin: 0; text-indent: 48px; font: 300 24px/47px "Liberation Serif", "Noto Sans CJK SC", serif; color: #000; white-space: nowrap; }
.full, .last { display: block; text-indent: 0; }
.full { text-align: justify; text-align-last: justify; }
.page .in { text-indent: 48px; }
.latin { font-weight: 400; }
.page s { text-decoration: none; font-feature-settings: "halt"; }
.er { fill: none; stroke: #222; }
.er text { fill: #111; stroke: none; font-size: 20px; font-weight: 500; }
.crop { position: absolute; width: 35px; height: 35px; border: 0 solid #c6c6c6; }
.tl { left: 145px; top: 22px; border-width: 1px 1px 0 0; }
.tr { right: 145px; top: 22px; border-width: 1px 0 0 1px; }
.bl { left: 145px; top: 109px; border-width: 0 1px 1px 0; }
.br { right: 145px; top: 109px; border-width: 0 0 1px 1px; }

.tools { position: absolute; right: 196px; top: 30px; display: flex; flex-direction: column; gap: 12px; }
.fold { width: 36px; height: 36px; margin-bottom: 1px; justify-content: center; border-radius: 3px; background: #f7f8fa; box-shadow: 0 0 5px 1px #d8dade; }
.card { gap: 8px; width: 150px; height: 48px; border-radius: 4px; overflow: hidden; background: #fff; box-shadow: 0 1px 5px #d4d6da; color: #000; }
.card span { display: flex; align-items: center; justify-content: center; width: 47px; height: 48px; }
.card svg { fill: none; stroke: #fff; stroke-width: 1.5; }
.violet span { background: #8889fb; }
.sky span { background: #35a6e8; }

.scroll { position: relative; display: flex; flex-direction: column; width: 20px; background: #e9eaf0; }
.thumb { height: 54px; margin: 364px 1px 0; border-radius: 8px; background: #dfe0e6; }
.jump { display: flex; flex-direction: column; align-items: center; gap: 17px; margin-top: auto; margin-bottom: 9px; }
.down { width: 18px; height: 22px; margin-bottom: -8px; justify-content: center; border-radius: 6px; background: #c7c9d1; }
.obj { width: 9px; height: 9px; border: 2px solid #8b93ab; border-radius: 2px; }
.meter { position: absolute; right: 0; border-radius: 5px; }
.a { top: -3px; width: 15px; height: 89px; border-radius: 5px 0 0 5px; border: 5px solid #4b4e60; border-width: 10px 2px 10px 6px; background: repeating-linear-gradient(transparent 0 2px, #4b4e60 2px 4px), linear-gradient(#2b2e3e 26px, #c3c95a 27px, #5cc4a4 68px); }
.b { top: 201px; right: 3px; width: 12px; height: 85px; border: 0 solid #5c5e62; border-width: 69px 1px 3px; background: repeating-linear-gradient(#66c07a 0 1px, #3c7a4c 1px 4px); }
.bar { position: absolute; right: 0; top: 567px; width: 2px; height: 16px; border: 1px solid #000; border-right: 0; background: #fff; }

/* status bar */
.status { position: relative; display: flex; align-items: center; justify-content: space-between; height: 43px; flex: none; border-top: 1px solid #dfe1e5; background: #f5f6f9; }
.facts { display: flex; align-items: center; }
.facts > * { height: 26px; border-right: 1px solid #dfe1e5; }
.facts button { gap: 5px; }
.f1 { width: 119px; padding-left: 14px; }
.f2 { width: 120px; padding-left: 13px; }
.f3 { width: 130px; padding-left: 13px; }
.f4 { width: 128px; padding-left: 12px; }
.facts .f4 { border-color: transparent; }
.f5 { width: 94px; padding-left: 13px; }
.views { display: flex; align-items: center; gap: 15px; padding-right: 63px; }
.views .sep { margin: 0 1px; }
.views .on { width: 36px; height: 36px; margin: 0 -6px; justify-content: center; background: #d6dbe5; border-radius: 3px; }
.views .zoom { gap: 8px; width: 64px; margin: 0 2px 0 -3px; color: #4a5270; }
.slider { width: 212px; height: 20px; margin: 0; appearance: none; background: linear-gradient(90deg, #444a58 49%, #dfe1e5 49%) center / 208px 2px no-repeat; }
.slider::-webkit-slider-thumb { appearance: none; width: 18px; height: 18px; border: 2px solid #444a58; border-radius: 50%; background: #ededee; }
.pet { position: absolute; right: 0; bottom: 0; }

/* taskbar */
.taskbar { position: relative; display: flex; justify-content: space-between; height: 60px; flex: none; background: linear-gradient(90deg, #29363d, #23343c 60%, #292b2b 77%, #1f2c32 86%, #1d2b32); color: #fff; }
.pins { display: flex; }
.pins button { width: 75px; justify-content: center; position: relative; }
.pins button:first-child { width: 73px; }
.pins .after { margin-left: 7px; }
.run::after { content: ""; position: absolute; left: 7px; right: 7px; bottom: 0; height: 3px; background: #76b3ea; }
.pins .active { background: #505c64; }
.active::after { left: 0; right: 0; }
.tray { display: flex; align-items: center; gap: 12px; }
.temp { position: relative; margin-right: -5px; padding-bottom: 2px; text-align: center; }
.temp svg { position: absolute; left: 18px; top: 12px; }
.pink { color: #f216b4; }
.red { color: #d92020; }
.ime { width: 24px; font-size: 22px; margin-right: 6px; }
.clock { position: relative; width: 120px; padding-bottom: 4px; text-align: center; }
.dot { position: absolute; right: 5px; top: -1px; width: 6px; height: 6px; border-radius: 3px; background: #f01414; }
.note { margin: 0 8px 4px 4px; }
.peek { align-self: stretch; width: 1px; margin-right: 5px; background: #66737a; }
.mark { position: absolute; right: 15px; bottom: 7px; font: 19px/24px "Liberation Sans", "Noto Sans CJK SC", sans-serif; color: #d5d8da; opacity: .8; }
```
